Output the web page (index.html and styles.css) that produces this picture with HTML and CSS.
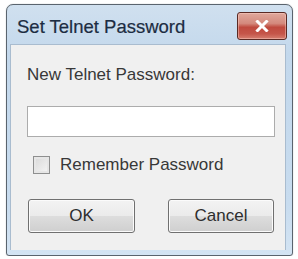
FILE: index.html
```html
<!DOCTYPE html>
<html lang="en">
<head>
    <meta charset="UTF-8">
    <title>Set Telnet Password</title>
    <link rel="stylesheet" href="styles.css">
</head>
<body>
    <div class="window">
        <!-- Title bar -->
        <div class="titlebar">
            <span class="title">Set Telnet Password</span>
            <button class="close-btn" aria-label="Close">
                <svg width="14" height="12" viewBox="0 0 14 12">
                    <path d="M2.5 1.5 L11.5 10.5 M11.5 1.5 L2.5 10.5" stroke="#ffffff" stroke-width="3" stroke-linecap="square"/>
                </svg>
            </button>
        </div>

        <!-- Dialog body -->
        <div class="content">
            <label class="field-label" for="pw">New Telnet Password:</label>
            <input class="pw-input" id="pw" type="password">
            <label class="remember">
                <span class="checkbox"></span>
                <span>Remember Password</span>
            </label>
            <div class="buttons">
                <button class="btn ok-btn">OK</button>
                <button class="btn cancel-btn">Cancel</button>
            </div>
        </div>
    </div>
</body>
</html>
```

FILE: styles.css
```css
/* Reset */
* {
    margin: 0;
    padding: 0;
    box-sizing: border-box;
    font-family: "Liberation Sans", Arial, sans-serif;
}

body {
    background-color: #ffffff;
}

/* Window frame */
.window {
    margin: 4px 0 0 6px;
    width: 287px;
    height: 252px;
    border: 1px solid #5a646e;
    border-radius: 7px 7px 3px 3px;
    background: linear-gradient(#d0e0ef, #c3d8ec 20%, #c8dcef 80%, #d4e4f3);
    padding: 0 6px 5px 3px;
    display: flex;
    flex-direction: column;
    box-shadow: 0 0 1px #8a949e;
}

/* Title bar */
.titlebar {
    height: 39px;
    display: flex;
    align-items: flex-start;
    padding-left: 7px;
}

.title {
    font-size: 18.5px;
    line-height: 22px;
    margin-top: 11px;
    color: #1c2c42;
    -webkit-text-stroke: 0.2px #1c2c42;
}

.close-btn {
    margin-left: auto;
    margin-top: 7px;
    margin-right: -1px;
    width: 50px;
    height: 28px;
    border: 1px solid #5a2a24;
    border-radius: 3px;
    background: linear-gradient(#e0a89c 0%, #d48a7d 40%, #bf4a3e 55%, #c5564a 80%, #d67f70 100%);
    display: flex;
    align-items: center;
    justify-content: center;
    box-shadow: inset 0 0 0 1px rgba(255, 210, 200, 0.45);
}

/* Body */
.content {
    flex: 1;
    background-color: #f0f0f0;
    border: 1px solid #a9bccf;
    border-bottom: none;
    padding: 20px 0 0 16px;
    display: flex;
    flex-direction: column;
    align-items: flex-start;
    color: #383838;
    font-size: 17px;
}

.field-label {
    line-height: 20px;
}

.pw-input {
    margin-top: 21px;
    width: 248px;
    height: 31px;
    border: 1px solid #acacac;
    background-color: #ffffff;
}

.remember {
    margin-top: 18px;
    height: 20px;
    line-height: 20px;
    display: flex;
    align-items: center;
    gap: 10px;
    padding-left: 6px;
}

.checkbox {
    width: 17px;
    height: 18px;
    border: 1px solid #8e8f8f;
    background: linear-gradient(135deg, #d8d8d8, #f6f6f6);
    box-shadow: inset 0 0 0 2px #e6e6e6;
}

/* Buttons */
.buttons {
    margin-top: 24px;
    display: flex;
    gap: 33px;
    padding-left: 1px;
}

.btn {
    height: 34px;
    border: 1px solid #707070;
    border-radius: 3px;
    background: linear-gradient(#f3f3f3 0%, #ebebeb 50%, #dddddd 51%, #cfcfcf 100%);
    box-shadow: inset 0 0 0 1px #fbfbfb;
    font-size: 17px;
    color: #2e2e2e;
}

.ok-btn {
    width: 107px;
}

.cancel-btn {
    width: 106px;
}
```
